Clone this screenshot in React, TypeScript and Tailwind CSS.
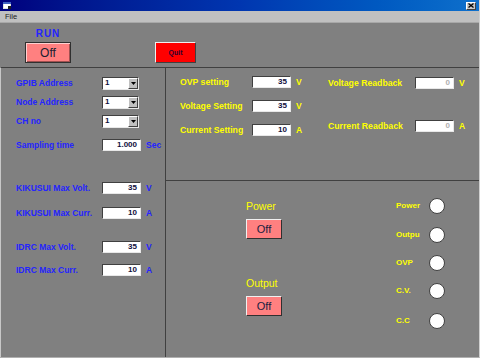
import React from "react";

const sunken =
  "border border-t-[#404040] border-l-[#404040] border-b-[#e8e8e8] border-r-[#e8e8e8] bg-white";

function Field({ value, w = 39, dim = false }: { value: string; w?: number; dim?: boolean }) {
  return (
    <div
      className={`${sunken} h-[12px] flex items-center justify-end pr-[3px] text-[8px] leading-none font-bold ${
        dim ? "text-[#b0b0b0]" : "text-[#101040]"
      }`}
      style={{ width: w }}
    >
      {value}
    </div>
  );
}

function Combo() {
  return (
    <div className={`${sunken} w-[37px] h-[13px] flex items-center justify-between`}>
      <span className="pl-[2px] text-[8px] font-bold leading-none text-[#101040]">1</span>
      <div className="w-[10px] h-[11px] bg-[#c0c0c0] border border-t-white border-l-white border-b-[#404040] border-r-[#404040] flex items-center justify-center">
        <svg width="5" height="3" viewBox="0 0 5 3">
          <path d="M0 0H5L2.5 3Z" fill="#000" />
        </svg>
      </div>
    </div>
  );
}

function LRow({ label, children, mt }: { label: string; children: React.ReactNode; mt: string }) {
  return (
    <div className={`flex items-center h-[12px] ${mt}`}>
      <div className="w-[86px] text-[8.5px] font-bold text-[#2424ff] leading-none whitespace-nowrap">{label}</div>
      {children}
    </div>
  );
}

function Unit({ u, c }: { u: string; c: string }) {
  return <span className={`ml-[5px] text-[8.5px] font-bold leading-none ${c}`}>{u}</span>;
}

function RRow({
  label,
  value,
  unit,
  lw,
  mt,
  dim,
}: {
  label: string;
  value: string;
  unit: string;
  lw: string;
  mt: string;
  dim?: boolean;
}) {
  return (
    <div className={`flex items-center h-[12px] ${mt}`}>
      <div className={`${lw} text-[8.7px] font-bold text-[#ffff00] leading-none whitespace-nowrap`}>{label}</div>
      <Field value={value} dim={dim} />
      <Unit u={unit} c="text-[#ffff00]" />
    </div>
  );
}

function OffBtn() {
  return (
    <div className="w-[36px] h-[20px] bg-[#ff8080] border border-t-[#f0f0f0] border-l-[#f0f0f0] border-b-[#303030] border-r-[#303030] flex items-center justify-center text-[11px] text-[#202040] leading-none">
      Off
    </div>
  );
}

function Lamp({ label, mt }: { label: string; mt: string }) {
  return (
    <div className={`flex items-center h-[15px] ${mt}`}>
      <div className="w-[33px] text-[8px] font-bold text-[#ffff00] leading-none">{label}</div>
      <div className="w-[16px] h-[16px] rounded-full bg-white border border-[#404040]" />
    </div>
  );
}

export default function App() {
  return (
    <div className="w-[480px] h-[358px] bg-[#808080] flex flex-col overflow-hidden font-['Liberation_Sans',Arial,sans-serif] border-r border-b border-r-[#d0d0d0] border-b-[#b0b0b0]">
      {/* title bar */}
      <div className="h-[11px] bg-gradient-to-r from-[#00007e] via-[#0036b0] to-[#0f70cc] flex items-center justify-between pl-[3px] pr-[3px]">
        <svg width="8" height="7" viewBox="0 0 8 7">
          <rect x="0" y="0" width="8" height="7" fill="#e0e0e0" />
          <rect x="1" y="2" width="6" height="4" fill="#ffffff" />
          <rect x="0" y="0" width="8" height="2" fill="#4060c0" />
          <rect x="5" y="4" width="3" height="3" fill="#202020" />
        </svg>
        <div className="w-[10px] h-[8px] bg-[#c8c8c8] border border-t-white border-l-white border-b-[#404040] border-r-[#404040] flex items-center justify-center">
          <svg width="6" height="5" viewBox="0 0 6 5">
            <path d="M0.5 0.5L5.5 4.5M5.5 0.5L0.5 4.5" stroke="#000" strokeWidth="1.3" />
          </svg>
        </div>
      </div>
      {/* menu bar */}
      <div className="h-[12px] bg-[#c0c0c0] flex items-center pl-[5px] border-b border-b-[#a8a8a8]">
        <span className="text-[7.5px] text-[#202020] leading-none">File</span>
      </div>
      {/* top controls */}
      <div className="h-[44px] flex items-end pb-[4px] pl-[25px]">
        <div className="flex flex-col items-center w-[46px]">
          <span className="text-[10px] font-bold tracking-[1px] text-[#2424ff] leading-[11px] mb-[3px]">RUN</span>
          <div className="w-[46px] h-[21px] bg-[#ff8080] border border-[#303030] shadow-[inset_1px_1px_0_#ffd0d0,inset_-1px_-1px_0_#a05050] flex items-center justify-center text-[12px] text-[#202030] leading-none">
            Off
          </div>
        </div>
        <div className="ml-[84px] w-[41px] h-[21px] bg-[#ff0000] border border-t-[#f0f0f0] border-l-[#f0f0f0] border-b-[#404040] border-r-[#404040] flex items-center justify-center text-[7px] font-bold text-[#300030] leading-none">
          Quit
        </div>
      </div>
      {/* panels */}
      <div className="flex-1 flex">
        {/* left panel */}
        <div className="w-[166px] border-t border-t-[#404040] border-l border-l-[#c8c8c8] border-r border-r-[#404040] pl-[15px] pt-[9px]">
          <LRow label="GPIB Address" mt="">
            <Combo />
          </LRow>
          <LRow label="Node Address" mt="mt-[7px]">
            <Combo />
          </LRow>
          <LRow label="CH no" mt="mt-[7px]">
            <Combo />
          </LRow>
          <LRow label="Sampling time" mt="mt-[12px]">
            <Field value="1.000" w={39} />
            <Unit u="Sec" c="text-[#2424ff]" />
          </LRow>
          <LRow label="KIKUSUI Max Volt." mt="mt-[31px]">
            <Field value="35" w={39} />
            <Unit u="V" c="text-[#2424ff]" />
          </LRow>
          <LRow label="KIKUSUI Max Curr." mt="mt-[13px]">
            <Field value="10" w={39} />
            <Unit u="A" c="text-[#2424ff]" />
          </LRow>
          <LRow label="IDRC Max Volt." mt="mt-[22px]">
            <Field value="35" w={39} />
            <Unit u="V" c="text-[#2424ff]" />
          </LRow>
          <LRow label="IDRC Max Curr." mt="mt-[11px]">
            <Field value="10" w={39} />
            <Unit u="A" c="text-[#2424ff]" />
          </LRow>
        </div>
        {/* right column */}
        <div className="flex-1 flex flex-col">
          <div className="h-[114px] border-t border-t-[#404040] border-b border-b-[#404040] flex pl-[14px]">
            <div className="w-[148px] pt-[8px]">
              <RRow label="OVP setting" value="35" unit="V" lw="w-[72px]" mt="" />
              <RRow label="Voltage Setting" value="35" unit="V" lw="w-[72px]" mt="mt-[12px]" />
              <RRow label="Current Setting" value="10" unit="A" lw="w-[72px]" mt="mt-[12px]" />
            </div>
            <div className="pt-[9px]">
              <RRow label="Voltage Readback" value="0" unit="V" lw="w-[87px]" mt="" dim />
              <RRow label="Current Readback" value="0" unit="A" lw="w-[87px]" mt="mt-[31px]" dim />
            </div>
          </div>
          <div className="flex-1 flex pl-[80px]">
            <div className="flex flex-col w-[36px] pt-[19px]">
              <span className="text-[10.5px] text-[#ffff00] leading-[12px]">Power</span>
              <div className="mt-[7px]">
                <OffBtn />
              </div>
              <span className="mt-[38px] text-[10.5px] text-[#ffff00] leading-[12px]">Output</span>
              <div className="mt-[7px]">
                <OffBtn />
              </div>
            </div>
            <div className="ml-[114px] pt-[17px] flex flex-col">
              <Lamp label="Power" mt="" />
              <Lamp label="Outpu" mt="mt-[14px]" />
              <Lamp label="OVP" mt="mt-[13px]" />
              <Lamp label="C.V." mt="mt-[13px]" />
              <Lamp label="C.C" mt="mt-[15px]" />
            </div>
          </div>
        </div>
      </div>
    </div>
  );
}
